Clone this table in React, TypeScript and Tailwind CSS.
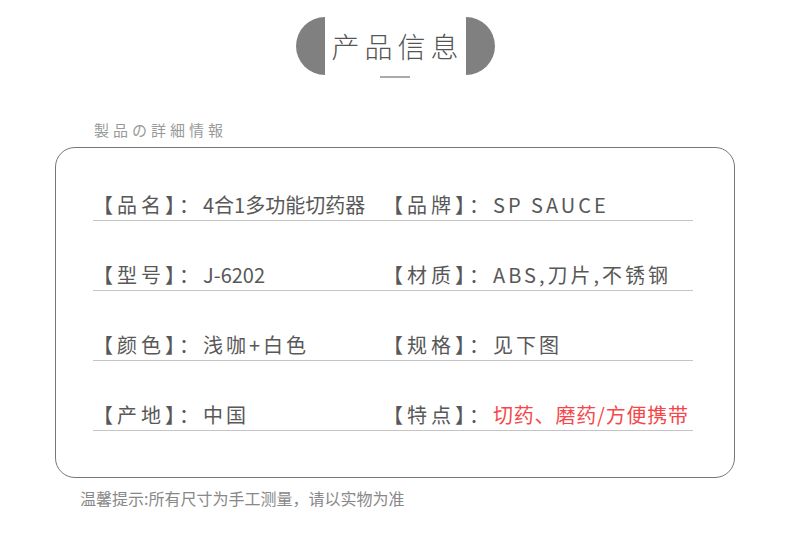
const rows = [
  {
    left: { label: "品名", value: "4合1多功能切药器", spacing: "" },
    right: { label: "品牌", value: "SP SAUCE", spacing: "tracking-[3px]" },
  },
  {
    left: { label: "型号", value: "J-6202", spacing: "" },
    right: { label: "材质", value: "ABS,刀片,不锈钢", spacing: "tracking-[3px]" },
  },
  {
    left: { label: "颜色", value: "浅咖+白色", spacing: "tracking-[3px]" },
    right: { label: "规格", value: "见下图", spacing: "tracking-[3px]" },
  },
  {
    left: { label: "产地", value: "中国", spacing: "tracking-[3px]" },
    right: { label: "特点", value: "切药、磨药/方便携带", spacing: "tracking-[0.8px]", red: true },
  },
];

type Cell = { label: string; value: string; spacing: string; red?: boolean };

const InfoCell = ({ cell, width }: { cell: Cell; width: string }) => {
  return (
    <div className={`flex items-center ${width}`}>
      <span className="w-[110px] shrink-0 text-[#585858] tracking-[4px]">
        【{cell.label}】：
      </span>
      <span className={`${cell.spacing} ${cell.red ? "text-[#f5474a]" : "text-[#585858]"}`}>
        {cell.value}
      </span>
    </div>
  );
};

export default function App() {
  return (
    <div
      className="w-[790px] h-[536px] bg-white overflow-hidden"
      style={{ fontFamily: '"Noto Sans CJK SC", "Noto Sans", sans-serif' }}
    >
      {/* title */}
      <div className="pt-[17px] flex justify-center">
        <div className="w-[29px] h-[58px] rounded-l-full bg-[#808080]" />
        <div className="w-[141px] h-[58px] flex items-center justify-center text-[28px] tracking-[5px] pl-[5px] text-[#555] font-light">
          产品信息
        </div>
        <div className="w-[29px] h-[58px] rounded-r-full bg-[#808080]" />
      </div>
      <div className="mx-auto mt-[1px] w-[30px] h-[2px] bg-[#aaa]" />

      <p
        className="mt-[42px] ml-[94px] text-[15px] leading-[20px] tracking-[4px] text-[#999]"
        style={{ fontFamily: '"Noto Sans CJK JP", sans-serif' }}
      >
        製品の詳細情報
      </p>

      {/* card */}
      <div className="mx-auto mt-[7px] w-[680px] h-[331px] border border-[#777] rounded-[20px] pl-[37px] pt-[3px]">
        {rows.map((row, i) => (
          <div
            key={i}
            className="w-[600px] h-[70px] flex items-end pb-[3px] border-b border-[#c4c4c4] text-[20px] leading-[24px]"
          >
            <InfoCell cell={row.left} width="w-[290px]" />
            <InfoCell cell={row.right} width="flex-1" />
          </div>
        ))}
      </div>

      <p className="mt-[10px] ml-[80px] text-[16px] leading-[20px] text-[#888]">
        温馨提示:所有尺寸为手工测量，请以实物为准
      </p>
    </div>
  );
}
